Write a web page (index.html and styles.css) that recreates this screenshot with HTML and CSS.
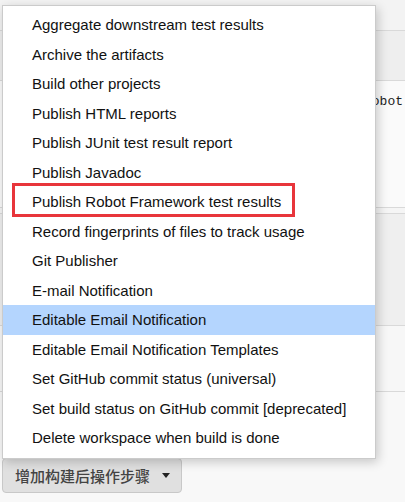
FILE: index.html
```html
<!DOCTYPE html>
<html>
<head>
<meta charset="utf-8">
<link rel="stylesheet" href="styles.css">
</head>
<body>
<div class="page">
  <div class="sec s1"></div>
  <div class="sec s2"></div>
  <div class="sec s3"><div class="code">robot</div></div>
  <div class="sec s3b"></div>
  <div class="sec s4"></div>
  <div class="sec s5"></div>
  <div class="sec s6"></div>
  <button class="add-btn"><span class="label">增加构建后操作步骤</span><span class="caret"></span></button>

  <ul class="menu">
    <li>Aggregate downstream test results</li>
    <li>Archive the artifacts</li>
    <li>Build other projects</li>
    <li>Publish HTML reports</li>
    <li>Publish JUnit test result report</li>
    <li>Publish Javadoc</li>
    <li>Publish Robot Framework test results</li>
    <li>Record fingerprints of files to track usage</li>
    <li>Git Publisher</li>
    <li>E-mail Notification</li>
    <li class="active">Editable Email Notification</li>
    <li>Editable Email Notification Templates</li>
    <li>Set GitHub commit status (universal)</li>
    <li>Set build status on GitHub commit [deprecated]</li>
    <li>Delete workspace when build is done</li>
  </ul>
  <div class="mark"></div>
</div>
</body>
</html>
```

FILE: styles.css
```css
html, body {
  margin: 0;
  padding: 0;
}
body {
  background: #f8f8f8;
  font-family: "Liberation Sans", Arial, sans-serif;
}
.page {
  position: relative;
  width: 405px;
  height: 502px;
  overflow: hidden;
}
.sec {
  border-bottom: 1px solid #d9d9d9;
}
.s1 { height: 30px; background: #f3f3f3; }
.s2 { height: 49px; background: #eeeeee; }
.s3 { height: 126px; background: #fafafa; }
.s3b { height: 5px; background: #f5f5f5; }
.s4 { height: 111px; background: #efefef; }
.s5 { height: 65px; background: #f7f7f7; }
.s6 { height: 66px; background: #f8f8f8; border-bottom: none; }
.code {
  font-family: "Liberation Mono", "Courier New", monospace;
  font-size: 13px;
  color: #222;
  padding: 13px 0 0 364px;
  line-height: 16px;
}
.add-btn {
  display: flex;
  align-items: center;
  margin-left: 2px;
  height: 35px;
  width: 180px;
  box-sizing: border-box;
  padding: 0 0 0 12px;
  border: 1px solid #c8c8c8;
  border-radius: 4px;
  background: #e0e0e0;
  color: #444;
  font-family: "Noto Sans CJK SC", sans-serif;
  font-size: 15px;
  font-weight: 500;
}
.add-btn .label {
  line-height: 20px;
}
.add-btn .caret {
  width: 0;
  height: 0;
  margin-left: 12px;
  border-left: 4px solid transparent;
  border-right: 4px solid transparent;
  border-top: 5px solid #222;
}
.menu {
  position: absolute;
  left: 2px;
  top: 5px;
  width: 372px;
  margin: 0;
  padding: 4px 0 5px;
  list-style: none;
  background: #fff;
  border: 1px solid #cbcbcb;
  box-shadow: 2px 3px 10px rgba(0, 0, 0, 0.2);
}
.menu li {
  height: 29.5px;
  line-height: 29.5px;
  padding-left: 29px;
  font-size: 15px;
  color: #111;
  white-space: nowrap;
}
.menu li.active {
  background: #b4d5fe;
}
.mark {
  position: absolute;
  left: 12px;
  top: 183px;
  width: 283px;
  height: 34px;
  box-sizing: border-box;
  border: 3px solid #e8353b;
}
```
